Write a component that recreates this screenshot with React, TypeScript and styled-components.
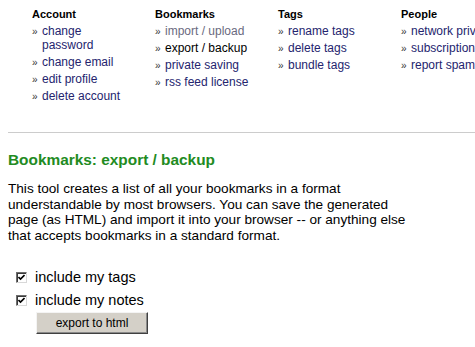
import React, { useState } from 'react';
import styled, { createGlobalStyle } from 'styled-components';

const GlobalStyle = createGlobalStyle`
  html, body {
    margin: 0;
    padding: 0;
    background: #ffffff;
    font-family: 'Liberation Sans', Arial, sans-serif;
    color: #000000;
  }
`;

const Page = styled.div`
  width: 475px;
  height: 347px;
  overflow: hidden;
  padding: 0 8px;
  box-sizing: border-box;
`;

const Nav = styled.div`
  display: grid;
  grid-template-columns: repeat(4, 123px);
  padding: 8px 0 0 24px;
  height: 132px;
  box-sizing: border-box;
`;

const NavColumn = styled.div`
  display: flex;
  flex-direction: column;
`;

const NavTitle = styled.div`
  font-size: 11px;
  font-weight: bold;
  line-height: 13px;
  margin-bottom: 3px;
`;

const NavList = styled.ul`
  list-style: none;
  margin: 0;
  padding: 0;
  width: 100px;
`;

const NavItem = styled.li<{ $state?: 'current' | 'muted' }>`
  position: relative;
  padding-left: 10px;
  font-size: 12px;
  line-height: 14px;
  margin-bottom: 3px;
  white-space: ${(props) => (props.$state ? 'nowrap' : 'normal')};
  color: ${(props) =>
    props.$state === 'current' ? '#000000' : props.$state === 'muted' ? '#6a6a80' : '#24246e'};

  &::before {
    content: '»';
    position: absolute;
    left: 0;
    top: 1px;
    font-size: 10px;
    color: #333333;
  }
`;

const Rule = styled.hr`
  border: 0;
  border-top: 1px solid #cccccc;
  margin: 0 -8px 0 0;
`;

const Heading = styled.h2`
  color: #228b22;
  font-size: 15.4px;
  font-weight: bold;
  margin: 18px 0 0;
  line-height: 18px;
`;

const Intro = styled.p`
  font-size: 13.6px;
  line-height: 15.6px;
  margin: 12px 0 0;
  width: 408px;
`;

const Form = styled.form`
  display: flex;
  flex-direction: column;
  margin-top: 23px;
  padding-left: 8px;
`;

const CheckRow = styled.label`
  display: flex;
  align-items: center;
  gap: 8px;
  font-size: 14.5px;
  line-height: 23px;
  height: 23px;
  cursor: pointer;
`;

const HiddenInput = styled.input`
  display: none;
`;

const Box = styled.span`
  display: inline-flex;
  align-items: center;
  justify-content: center;
  width: 11px;
  height: 11px;
  box-sizing: border-box;
  background: #ffffff;
  border: 1px solid;
  border-color: #6e6e6e #d8d8d8 #d8d8d8 #6e6e6e;
  box-shadow: inset 1px 1px 0 #3a3a3a;
`;

const ExportButton = styled.button`
  align-self: flex-start;
  margin: 0 0 0 20px;
  width: 112px;
  height: 22px;
  font-family: 'Liberation Sans', Arial, sans-serif;
  font-size: 12px;
  background: #d4d0c8;
  border: 1px solid;
  border-color: #f4f4f4 #404040 #404040 #f4f4f4;
  box-shadow: inset -1px -1px 0 #8a8a8a;
  padding: 0;
  color: #000000;
`;

const columns = [
  {
    title: 'Account',
    items: [
      { label: 'change password' },
      { label: 'change email' },
      { label: 'edit profile' },
      { label: 'delete account' },
    ],
  },
  {
    title: 'Bookmarks',
    items: [
      { label: 'import / upload', state: 'muted' as const },
      { label: 'export / backup', state: 'current' as const },
      { label: 'private saving' },
      { label: 'rss feed license' },
    ],
  },
  {
    title: 'Tags',
    items: [{ label: 'rename tags' }, { label: 'delete tags' }, { label: 'bundle tags' }],
  },
  {
    title: 'People',
    items: [{ label: 'network privacy' }, { label: 'subscriptions' }, { label: 'report spam' }],
  },
];

function Check({ checked, onToggle, children }: { checked: boolean; onToggle: () => void; children: React.ReactNode }) {
  return (
    <CheckRow>
      <HiddenInput type="checkbox" checked={checked} onChange={onToggle} />
      <Box>
        {checked && (
          <svg width="7" height="7" viewBox="0 0 7 7">
            <path d="M0.5 3 L2.5 5 L6.5 1" stroke="#000" strokeWidth="1.6" fill="none" />
          </svg>
        )}
      </Box>
      {children}
    </CheckRow>
  );
}

export default function App() {
  const [tags, setTags] = useState(true);
  const [notes, setNotes] = useState(true);

  return (
    <Page>
      <GlobalStyle />
      <Nav>
        {columns.map((col) => (
          <NavColumn key={col.title}>
            <NavTitle>{col.title}</NavTitle>
            <NavList>
              {col.items.map((item) => (
                <NavItem key={item.label} $state={'state' in item ? item.state : undefined}>
                  {item.label}
                </NavItem>
              ))}
            </NavList>
          </NavColumn>
        ))}
      </Nav>
      <Rule />
      <Heading>Bookmarks: export / backup</Heading>
      <Intro>
        This tool creates a list of all your bookmarks in a format understandable by most
        browsers. You can save the generated page (as HTML) and import it into your browser --
        or anything else that accepts bookmarks in a standard format.
      </Intro>
      <Form onSubmit={(e) => e.preventDefault()}>
        <Check checked={tags} onToggle={() => setTags(!tags)}>
          include my tags
        </Check>
        <Check checked={notes} onToggle={() => setNotes(!notes)}>
          include my notes
        </Check>
        <ExportButton type="submit">export to html</ExportButton>
      </Form>
    </Page>
  );
}
